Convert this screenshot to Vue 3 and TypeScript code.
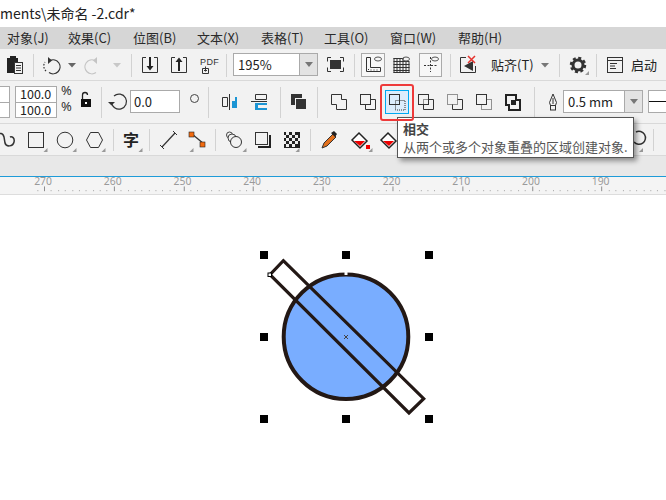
<script setup lang="ts">
const menus = [
  { t: '对象(J)', w: 61 }, { t: '效果(C)', w: 65 }, { t: '位图(B)', w: 64 }, { t: '文本(X)', w: 64 },
  { t: '表格(T)', w: 63 }, { t: '工具(O)', w: 66 }, { t: '窗口(W)', w: 68 }, { t: '帮助(H)', w: 60 },
]
const step = 73.8
const labels = [270, 260, 250, 240, 230, 220, 210, 200, 190].map((n, i) => ({ n, x: 27 + i * step }))
const minor: number[] = []
for (let i = -1; i < 92; i++) if (i % 10 !== 0) minor.push(27 + i * 7.38)
const handles = [[264, 255], [346, 255], [429, 255], [264, 337], [429, 337], [264, 419], [346, 419], [429, 419]]
const corners = [46.5, 75.5, 104.5, 141.5, 192.5, 245.5, 298.5, 371.5, 400.5, 642]
</script>

<template>
  <div class="app">
    <div class="title">ments\未命名 -2.cdr*</div>
    <div class="menu">
      <span v-for="m in menus" :key="m.t" class="mi" :style="{ width: m.w + 'px' }">{{ m.t }}</span>
    </div>

    <div class="bar bar1">
      <svg width="233" height="31" viewBox="0 49 233 31">
        <path d="M7 58h3v-2h6v2h2v15H7z" fill="#222" />
        <rect x="14.5" y="62.5" width="8" height="11" fill="#f2f2f2" stroke="#333" />
        <path d="M16 65.5h5M16 68h5M16 70.5h5" stroke="#333" />
        <rect class="sep" x="33" y="54" width="1" height="23" />
        <path d="M50 60.5a7 7 0 1 1-1 12" fill="none" stroke="#333" stroke-width="1.2" />
        <path d="M46 71a7 7 0 0 1-1-9" fill="none" stroke="#333" stroke-width="1.2" stroke-dasharray="1.5 1.5" />
        <path d="M48 57v7l4-3.5z" fill="#333" />
        <path d="M68 63h8l-4 4.5z" fill="#666" />
        <path d="M95 60.5a7 7 0 1 0 1 12" fill="none" stroke="#c4c4c4" stroke-width="1.2" />
        <path d="M97 57v7l-4-3.5z" fill="#c4c4c4" />
        <path d="M113 63h8l-4 4.5z" fill="#c8c8c8" />
        <rect class="sep" x="131" y="54" width="1" height="23" />
        <path d="M146 57.5h-3.5v15h15v-15H154" fill="none" stroke="#333" />
        <path d="M149 57h2v9h2.500l-3.500 4.500-3.500-4.500H149z" fill="#222" />
        <path d="M175 57.500h-3.500v15h15v-15H183" fill="none" stroke="#333" />
        <path d="M178 71h2v-9h2.500l-3.500-4.500-3.500 4.500H178z" fill="#222" />
        <text x="200" y="65" class="pdf">PDF</text>
        <path d="M202.500 68.500h6v5h-6zM205.500 66.500v5M204 70.500h3" fill="none" stroke="#333" />
        <rect class="sep" x="226" y="54" width="1" height="23" />
      </svg>
      <div class="combo c1"><span>195%</span><i class="drop"><b></b></i></div>
      <svg width="173" height="31" viewBox="318 49 173 31">
        <rect x="330" y="60" width="11" height="9" fill="#333" />
        <path d="M331 57.500h-3.500v4M340 57.500h3.500v4M331 71.500h-3.500v-4M340 71.500h3.500v-4" fill="none" stroke="#333" />
        <rect class="sep" x="354" y="54" width="1" height="23" />
        <rect x="361.500" y="53.500" width="23" height="23" fill="#f7f7f7" stroke="#aaa" />
        <path d="M366.500 57.500v14h14v-4h-10v-10z" fill="none" stroke="#333" />
        <path d="M368 69.500h1M371 69.500v1M374 69.500v1M377 69.500v1" stroke="#333" />
        <ellipse cx="378" cy="59" rx="3.500" ry="2" fill="none" stroke="#555" />
        <path d="M393.500 58.500h10M393.500 61.500h16M393.500 64.500h16M393.500 67.500h16M393.500 70.500h16M393.500 72.500h16M394 58v15M397 58v15M400 58v15M403 58v15M406 62v11M409 62v11" fill="none" stroke="#333" />
        <ellipse cx="406" cy="59" rx="3.500" ry="2" fill="none" stroke="#555" />
        <rect x="419.500" y="53.500" width="22" height="23" fill="#f7f7f7" stroke="#aaa" />
        <path d="M430.500 57v15M424 65.500h14" stroke="#333" stroke-dasharray="2 1.500" />
        <ellipse cx="435" cy="59" rx="3.500" ry="2" fill="none" stroke="#555" />
        <rect class="sep" x="450" y="54" width="1" height="23" />
        <path d="M466 57.500h-5.500v15h15V66" fill="none" stroke="#333" />
        <path d="M464 66l9-5v10z" fill="#333" />
        <path d="M468 56l7 7M475 56l-7 7" stroke="#e5322d" stroke-width="1.500" />
      </svg>
      <span class="snap">贴齐(T)</span>
      <svg width="100" height="31" viewBox="531 49 100 31">
        <path d="M541 63h8l-4 4.500z" fill="#777" />
        <rect class="sep" x="559" y="54" width="1" height="23" />
        <circle cx="578" cy="65" r="5" fill="none" stroke="#333" stroke-width="3" />
        <circle cx="578" cy="65" r="7" fill="none" stroke="#333" stroke-width="2.500" stroke-dasharray="3 2.500" />
        <path d="M589 71v4h-4z" fill="#999" />
        <rect class="sep" x="596" y="54" width="1" height="23" />
        <rect x="607.500" y="57.500" width="15" height="15" fill="none" stroke="#333" />
        <path d="M608 60.500h14M610 63.500h7M610 66h5M610 68.500h6" stroke="#333" />
      </svg>
      <span class="start">启动</span>
    </div>

    <div class="bar bar2">
      <div class="pair p0"><span></span><span></span></div>
      <div class="pair p1"><span>100.0</span><span>100.0</span></div>
      <svg width="73" height="42" viewBox="57 81 73 42">
        <text x="61" y="95" class="pct">%</text>
        <text x="61" y="111" class="pct">%</text>
        <path d="M82.500 99v-4a2.500 2.500 0 0 1 5 0" fill="none" stroke="#222" stroke-width="1.300" />
        <rect x="81" y="99" width="10" height="8" fill="#111" />
        <rect x="85" y="102" width="2" height="2" fill="#fff" />
        <rect class="sep" x="101" y="87" width="1" height="31" />
        <path d="M114 96a7.500 7.500 0 1 1-2.500 6" fill="none" stroke="#333" stroke-width="1.200" />
        <path d="M108 102h7l-3.500 3.500z" fill="#333" />
      </svg>
      <div class="inp">0.0</div>
      <svg width="383" height="42" viewBox="180 81 383 42">
        <circle cx="194.500" cy="98.500" r="4" fill="none" stroke="#444" />
        <rect class="sep" x="208" y="87" width="1" height="31" />
        <path d="M222.500 97.500h5v9h-5zM229.500 94v16" fill="none" stroke="#333" stroke-dasharray="none" />
        <path d="M232 106v-5h3v-4h2v11h-5z" fill="#1c95d4" />
        <path d="M255.500 94.500h11v5h-11z M251 101.500h16" fill="none" stroke="#333" />
        <path d="M255 103h12v2h-9v3h9v2h-12z" fill="#1c95d4" />
        <rect class="sep" x="280" y="87" width="1" height="31" />
        <rect x="291" y="94" width="11" height="11" fill="#333" />
        <rect x="295.500" y="98.500" width="11" height="11" fill="#333" stroke="#f2f2f2" />
        <rect class="sep" x="317" y="87" width="1" height="31" />

        <path d="M331.500 94.500h10v5h5v10h-10v-5h-5z" class="o" />
        <rect x="360.500" y="94.500" width="10" height="10" class="o" />
        <path d="M370.500 99.500h5v10h-10v-5" class="o" />

        <rect x="385.500" y="90.500" width="23" height="23" fill="#dcedfc" stroke="#00a9f2" />
        <rect x="389.500" y="94.500" width="10" height="10" class="o" />
        <rect x="395.500" y="100.500" width="9.500" height="9.500" class="d" />

        <rect x="418.500" y="94.500" width="10" height="10" class="o" />
        <path d="M428.500 99.500h5v10h-10v-5" class="o" />
        <rect x="423.500" y="99.500" width="5" height="5" class="d" />

        <rect x="447.500" y="94.500" width="10" height="10" class="d" />
        <path d="M457.500 99.500h5v10h-10v-5" class="o" />

        <rect x="476.500" y="94.500" width="10" height="10" class="o" />
        <path d="M486.500 99.500h5v10h-10v-5" class="d" />

        <path d="M506 95h10v5h4v10h-11v-5h-3z" fill="none" stroke="#222" stroke-width="2" />
        <rect x="511" y="100" width="5" height="5" fill="#222" />
        <rect class="sep" x="534" y="87" width="1" height="31" />

        <path d="M553 94l3.500 8.500-1 3h-5l-1-3z" fill="none" stroke="#333" />
        <path d="M553 98v6" stroke="#333" />
        <rect x="550.500" y="105.500" width="5" height="4.500" fill="none" stroke="#333" />
      </svg>
      <div class="combo c2"><span>0.5 mm</span><i class="drop"><b></b></i></div>
      <div class="linebox"><i></i></div>
    </div>

    <div class="bar bar3">
      <svg width="666" height="31" viewBox="0 124 666 31">
        <path d="M-3 136c3-4 6-3 7 1l1 6c1 4 8 4 9-1 1-4-2-6-4-5" fill="none" stroke="#333" stroke-width="1.500" />
        <rect x="28.500" y="132.500" width="15" height="15" fill="none" stroke="#333" />
        <circle cx="65" cy="140" r="7.800" fill="none" stroke="#333" />
        <path d="M90.500 132.500h8l4 7.500-4 7.500h-8l-4-7.500z" fill="none" stroke="#333" />
        <rect class="sep" x="113" y="129" width="1" height="22" />
        <text x="123" y="146" class="zi">字</text>
        <rect class="sep" x="149" y="129" width="1" height="22" />
        <path d="M162 147l13-14" stroke="#333" stroke-width="1.200" />
        <path d="M160 145l4 4M173 131l4 4" stroke="#333" />
        <path d="M192 134l12 10" stroke="#333" stroke-width="1.200" />
        <rect x="189" y="132" width="5" height="5" fill="#f26a0f" stroke="#222" stroke-width=".6" />
        <rect x="200" y="142" width="5" height="5" fill="#f26a0f" stroke="#222" stroke-width=".6" />
        <rect class="sep" x="215" y="129" width="1" height="22" />
        <circle cx="229.500" cy="135" r="3" fill="none" stroke="#444" />
        <circle cx="232" cy="138" r="4" fill="#f2f2f2" stroke="#444" />
        <circle cx="236" cy="142" r="5.500" fill="#f2f2f2" stroke="#333" />
        <rect x="255.500" y="132.500" width="12" height="12" fill="none" stroke="#333" />
        <path d="M258 147h12v-12" fill="none" stroke="#222" stroke-width="2" />
        <rect x="284" y="132" width="16" height="16" fill="#222" />
        <path d="M286 132h3v3h-3zM292 132h3v3h-3zM284 135h2v3h-2zM289 135h3v3h-3zM295 135h3v3h-3zM286 138h3v3h-3zM292 138h3v3h-3zM298 138h2v3h-2zM284 141h2v3h-2zM289 141h3v3h-3zM295 141h3v3h-3zM286 144h3v3h-3zM292 144h3v3h-3z" fill="#eee" />
        <rect class="sep" x="310" y="129" width="1" height="22" />
        <path d="M322 148l2-5 9-9 3 3-9 9z" fill="#e2701c" stroke="#333" />
        <path d="M331 133l3-2 3 3-2 3z" fill="#222" />
        <path d="M352 140l7-7 8 8-7 7z" fill="#fff" stroke="#222" stroke-width="1.500" />
        <path d="M354 141h11l-5 5z" fill="#e00" />
        <path d="M366 149v-4h4v4z" fill="#e00" />
        <path d="M381 140l7-7 8 8-7 7z" fill="#fff" stroke="#222" stroke-width="1.500" />
        <path d="M383 141h11l-5 5z" fill="#e00" />
        <path d="M636 132a6.500 6.500 0 1 1-2 10" fill="none" stroke="#333" stroke-width="1.500" />
        <rect class="sep" x="653" y="129" width="1" height="22" />
        <path v-for="x in corners" :key="x" :d="`M${x + 1} 148v4h-4z`" fill="#999" />
      </svg>
    </div>

    <div class="band"></div>

    <svg class="ruler" width="666" height="18" viewBox="0 177 666 18">
      <text v-for="l in labels" :key="l.n" :x="l.x - 1" y="186" class="rn">{{ l.n }}</text>
      <rect v-for="l in labels" :key="'t' + l.n" :x="Math.round(l.x)" y="187" width="1" height="5" fill="#888" />
      <rect v-for="x in minor" :key="x" :x="Math.round(x)" y="191" width="1" height="1" fill="#999" />
    </svg>

    <svg class="canvas" width="666" height="305" viewBox="0 195 666 305">
      <circle cx="346" cy="336.700" r="62.300" fill="#79adff" stroke="#231815" stroke-width="4" />
      <path d="M283.300 260.700L423.700 398.700 409 413 270 274.700z" fill="none" stroke="#231815" stroke-width="3.200" stroke-linejoin="miter" />
      <rect v-for="h in handles" :key="h[0] + '-' + h[1]" :x="h[0] - 4" :y="h[1] - 4" width="8" height="8" fill="#000" />
      <rect x="268" y="273" width="3.500" height="3.500" fill="#fff" stroke="#000" />
      <rect x="344.500" y="272" width="3" height="3" fill="#fff" />
      <path d="M344 335l4 4M348 335l-4 4" stroke="#444" />
    </svg>

    <div class="tip">
      <div class="tt">相交</div>
      <div class="td">从两个或多个对象重叠的区域创建对象.</div>
    </div>
    <div class="red"></div>
  </div>
</template>

<style scoped>
.app {
  position: relative;
  width: 666px;
  height: 500px;
  overflow: hidden;
  background: #fff;
  font-family: "Noto Sans CJK SC", "Noto Sans", sans-serif;
  font-size: 13px;
  color: #222;
}
svg { display: block; flex: none; }
.title { height: 27px; line-height: 27px; font-size: 14px; color: #222; white-space: nowrap; }
.menu {
  height: 22px;
  background: #d6d6d6;
  display: flex;
  align-items: center;
  padding-left: 7px;
  white-space: nowrap;
}
.mi { flex: none; line-height: 22px; color: #2a2a2a; }
.bar { display: flex; background: #f2f2f2; box-sizing: border-box; }
.bar1 { height: 32px; border-bottom: 1px solid #d9d9d9; }
.bar2 { height: 43px; border-bottom: 1px solid #d9d9d9; }
.bar3 { height: 32px; border-bottom: 1px solid #d9d9d9; }
.sep { fill: #d2d2d2; }
.o { fill: none; stroke: #333; }
.d { fill: none; stroke: #333; stroke-dasharray: 1 1; }
.pdf { font: 9px "Liberation Sans", sans-serif; fill: #333; letter-spacing: .4px; }
.pct { font: 13px "Noto Sans", sans-serif; fill: #333; }
.zi { font: 700 16px "Noto Sans CJK SC", sans-serif; fill: #222; }
.rn { font: 11px "Noto Sans", sans-serif; fill: #9a9a9a; text-anchor: middle; }
.combo {
  flex: none;
  box-sizing: border-box;
  height: 23px;
  margin-top: 4px;
  display: flex;
  background: #fff;
  border: 1px solid #aaa;
  line-height: 21px;
  padding-left: 4px;
}
.combo span { flex: 1; }
.c1 { width: 85px; }
.c2 { width: 80px; margin-top: 9px; }
.drop {
  flex: none;
  width: 17px;
  background: #e3e3e3;
  border-left: 1px solid #aaa;
  display: flex;
  align-items: center;
  justify-content: center;
}
.drop b {
  width: 0;
  height: 0;
  border-left: 4px solid transparent;
  border-right: 4px solid transparent;
  border-top: 5px solid #777;
}
.snap { flex: none; width: 40px; line-height: 31px; white-space: nowrap; }
.start { flex: none; line-height: 31px; letter-spacing: 0; }
.pair {
  flex: none;
  display: flex;
  flex-direction: column;
  margin-top: 5px;
  box-sizing: border-box;
  height: 32px;
  background: #fff;
  border: 1px solid #aaa;
}
.pair span { height: 15px; line-height: 14px; padding-left: 4px; font-size: 12.500px; }
.pair span + span { border-top: 1px solid #aaa; }
.p0 { width: 10px; border-left: 0; margin-right: 5px; }
.p1 { width: 42px; }
.inp {
  flex: none;
  box-sizing: border-box;
  width: 50px;
  height: 23px;
  margin-top: 9px;
  background: #fff;
  border: 1px solid #aaa;
  line-height: 21px;
  padding-left: 3px;
}
.linebox {
  flex: none;
  box-sizing: border-box;
  width: 30px;
  height: 23px;
  margin: 9px 0 0 5px;
  background: #fff;
  border: 1px solid #aaa;
  display: flex;
  align-items: center;
}
.linebox i { width: 100%; height: 1px; background: #111; }
.band { height: 20px; background: #e8e8e8; border-bottom: 1px solid #1e9bd8; }
.ruler { background: #f4f4f4; border-bottom: 1px solid #ddd; box-sizing: content-box; height: 17px; }
.canvas { background: #fff; }
.tip {
  position: absolute;
  left: 397px;
  top: 117px;
  width: 237px;
  height: 41px;
  box-sizing: border-box;
  background: #fff;
  border: 1px solid #555;
  box-shadow: 3px 3px 5px rgba(0, 0, 0, .4);
  padding: 2px 5px;
  line-height: 18px;
  white-space: nowrap;
}
.tt { font-weight: 700; color: #444; }
.td { color: #555; }
.red {
  position: absolute;
  left: 380px;
  top: 84px;
  width: 34px;
  height: 37px;
  box-sizing: border-box;
  border: 2px solid #ee3a3a;
  border-radius: 3px;
}
</style>
